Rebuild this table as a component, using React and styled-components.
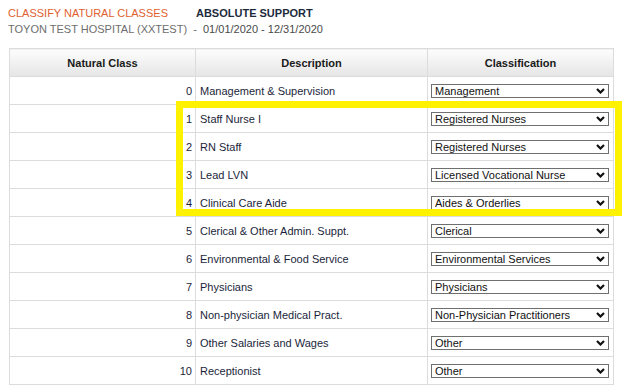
import React from "react";
import styled, { createGlobalStyle } from "styled-components";

const GlobalStyle = createGlobalStyle`
    body {
        margin: 0;
        background: #ffffff;
        font-family: "Liberation Sans", Arial, sans-serif;
    }
`;

const rows = [
    { id: 0, name: "Management & Supervision", cls: "Management" },
    { id: 1, name: "Staff Nurse I", cls: "Registered Nurses" },
    { id: 2, name: "RN Staff", cls: "Registered Nurses" },
    { id: 3, name: "Lead LVN", cls: "Licensed Vocational Nurse" },
    { id: 4, name: "Clinical Care Aide", cls: "Aides & Orderlies" },
    { id: 5, name: "Clerical & Other Admin. Suppt.", cls: "Clerical" },
    { id: 6, name: "Environmental & Food Service", cls: "Environmental Services" },
    { id: 7, name: "Physicians", cls: "Physicians" },
    { id: 8, name: "Non-physician Medical Pract.", cls: "Non-Physician Practitioners" },
    { id: 9, name: "Other Salaries and Wages", cls: "Other" },
    { id: 10, name: "Receptionist", cls: "Other" },
];

const Chevron = () => (
    <svg width="9" height="6" viewBox="0 0 9 6">
        <path d="M1 1 L4.5 4.5 L8 1" fill="none" stroke="#111" strokeWidth="2.2" />
    </svg>
);

const ClassSelect = ({ value }) => (
    <SelectWrap>
        <Select defaultValue={value}>
            <option>{value}</option>
        </Select>
        <Arrow>
            <Chevron />
        </Arrow>
    </SelectWrap>
);

const App = () => {
    return (
        <>
            <GlobalStyle />
            <Page>
                <Heading>
                    <TitleLine>
                        <Section>CLASSIFY NATURAL CLASSES</Section>
                        <Client>ABSOLUTE SUPPORT</Client>
                    </TitleLine>
                    <SubLine>
                        TOYON TEST HOSPITAL (XXTEST)&nbsp; - &nbsp;
                        <span className="dates">01/01/2020 - 12/31/2020</span>
                    </SubLine>
                </Heading>
                <TableWrap>
                    <Table>
                        <colgroup>
                            <col style={{ width: "186px" }} />
                            <col style={{ width: "232px" }} />
                            <col style={{ width: "186px" }} />
                        </colgroup>
                        <thead>
                            <tr>
                                <Th>Natural Class</Th>
                                <Th>Description</Th>
                                <Th>Classification</Th>
                            </tr>
                        </thead>
                        <tbody>
                            {rows.map((r) => (
                                <tr key={r.id}>
                                    <NumCell>{r.id}</NumCell>
                                    <Td>{r.name}</Td>
                                    <SelectCell>
                                        <ClassSelect value={r.cls} />
                                    </SelectCell>
                                </tr>
                            ))}
                        </tbody>
                    </Table>
                    <Highlight />
                </TableWrap>
            </Page>
        </>
    );
};
export default App;

const Page = styled.div`
    padding: 7px 8px 0 8px;
`;
const Heading = styled.div`
    display: flex;
    flex-direction: column;
    gap: 3px;
    font-size: 11px;
    line-height: 13px;
`;
const TitleLine = styled.div`
    display: flex;
    gap: 28px;
`;
const Section = styled.span`
    color: #e0612f;
`;
const Client = styled.span`
    color: #1c2b3c;
    font-weight: bold;
`;
const SubLine = styled.div`
    color: #6e6e6e;
    .dates {
        color: #4a4a4a;
    }
`;
const TableWrap = styled.div`
    position: relative;
    margin: 12px 0 0 1px;
    width: 605px;
`;
const Table = styled.table`
    border-collapse: collapse;
    table-layout: fixed;
    width: 605px;
    border: 1px solid #dcdcdc;
    font-size: 11px;
    color: #1b1f3b;
`;
const Th = styled.th`
    height: 27px;
    padding: 0;
    border: 1px solid #dcdcdc;
    background: linear-gradient(#fdfdfd, #e5e5e5);
    color: #1a1a1a;
    font-size: 11px;
    font-weight: bold;
    text-align: center;
`;
const Td = styled.td`
    height: 27px;
    padding: 0 4px;
    border: 1px solid #dcdcdc;
    white-space: nowrap;
`;
const NumCell = styled(Td)`
    text-align: right;
    padding-right: 3px;
`;
const SelectCell = styled(Td)`
    padding: 0 3px;
`;
const SelectWrap = styled.div`
    position: relative;
    width: 178px;
    height: 14px;
`;
const Select = styled.select`
    appearance: none;
    display: block;
    width: 178px;
    height: 14px;
    margin: 0;
    padding: 0 0 0 3px;
    border: 1px solid #6f6f6f;
    border-radius: 0;
    background: #ffffff;
    color: #111111;
    font-family: "Liberation Sans", Arial, sans-serif;
    font-size: 11px;
    line-height: 12px;
    outline: none;
`;
const Arrow = styled.span`
    position: absolute;
    right: 4px;
    top: 4px;
    display: flex;
    pointer-events: none;
`;
const Highlight = styled.div`
    position: absolute;
    left: 167px;
    top: 53px;
    width: 446px;
    height: 115px;
    box-sizing: border-box;
    border: 7px solid #fff200;
    pointer-events: none;
`;
